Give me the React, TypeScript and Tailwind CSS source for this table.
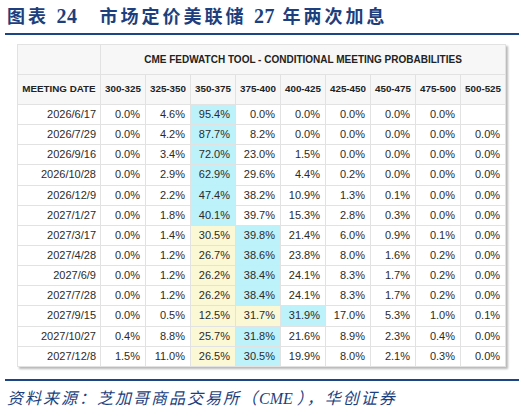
const columns = [
  "300-325",
  "325-350",
  "350-375",
  "375-400",
  "400-425",
  "425-450",
  "450-475",
  "475-500",
  "500-525",
];

type Tone = "blue" | "yellow" | undefined;

type Row = {
  date: string;
  values: string[];
  tones: Record<number, Tone>;
};

const rows: Row[] = [
  { date: "2026/6/17", values: ["0.0%", "4.6%", "95.4%", "0.0%", "0.0%", "0.0%", "0.0%", "0.0%", ""], tones: { 2: "blue" } },
  { date: "2026/7/29", values: ["0.0%", "4.2%", "87.7%", "8.2%", "0.0%", "0.0%", "0.0%", "0.0%", "0.0%"], tones: { 2: "blue" } },
  { date: "2026/9/16", values: ["0.0%", "3.4%", "72.0%", "23.0%", "1.5%", "0.0%", "0.0%", "0.0%", "0.0%"], tones: { 2: "blue" } },
  { date: "2026/10/28", values: ["0.0%", "2.9%", "62.9%", "29.6%", "4.4%", "0.2%", "0.0%", "0.0%", "0.0%"], tones: { 2: "blue" } },
  { date: "2026/12/9", values: ["0.0%", "2.2%", "47.4%", "38.2%", "10.9%", "1.3%", "0.1%", "0.0%", "0.0%"], tones: { 2: "blue" } },
  { date: "2027/1/27", values: ["0.0%", "1.8%", "40.1%", "39.7%", "15.3%", "2.8%", "0.3%", "0.0%", "0.0%"], tones: { 2: "blue" } },
  { date: "2027/3/17", values: ["0.0%", "1.4%", "30.5%", "39.8%", "21.4%", "6.0%", "0.9%", "0.1%", "0.0%"], tones: { 2: "yellow", 3: "blue" } },
  { date: "2027/4/28", values: ["0.0%", "1.2%", "26.7%", "38.6%", "23.8%", "8.0%", "1.6%", "0.2%", "0.0%"], tones: { 2: "yellow", 3: "blue" } },
  { date: "2027/6/9", values: ["0.0%", "1.2%", "26.2%", "38.4%", "24.1%", "8.3%", "1.7%", "0.2%", "0.0%"], tones: { 2: "yellow", 3: "blue" } },
  { date: "2027/7/28", values: ["0.0%", "1.2%", "26.2%", "38.4%", "24.1%", "8.3%", "1.7%", "0.2%", "0.0%"], tones: { 2: "yellow", 3: "blue" } },
  { date: "2027/9/15", values: ["0.0%", "0.5%", "12.5%", "31.7%", "31.9%", "17.0%", "5.3%", "1.0%", "0.1%"], tones: { 2: "yellow", 3: "yellow", 4: "blue" } },
  { date: "2027/10/27", values: ["0.4%", "8.8%", "25.7%", "31.8%", "21.6%", "8.9%", "2.3%", "0.4%", "0.0%"], tones: { 2: "yellow", 3: "blue" } },
  { date: "2027/12/8", values: ["1.5%", "11.0%", "26.5%", "30.5%", "19.9%", "8.0%", "2.1%", "0.3%", "0.0%"], tones: { 2: "yellow", 3: "blue" } },
];

const toneClass = (tone: Tone) =>
  tone === "blue" ? "bg-[#bdf2fb]" : tone === "yellow" ? "bg-[#fbf8d5]" : "bg-white";

export default function App() {
  return (
    <div className="flex h-[414px] w-[524px] flex-col bg-white">
      <h1 className="mt-[6px] flex pl-[7px] font-['Liberation_Serif','Noto_Sans_CJK_SC',serif] text-[18px] font-bold leading-[20px] tracking-[3px] text-[#1d3f7d] whitespace-pre">
        <span>
          图表 <span className="text-[20px] tracking-[0.5px]">24</span>
        </span>
        <span className="ml-[22px]">
          市场定价美联储 <span className="text-[20px] tracking-[0.5px]">27</span> 年两次加息
        </span>
      </h1>
      <div className="mx-[5px] mt-[6px] h-[2px] bg-[#1b4584]" />

      <div className="ml-[17px] mt-[9px] w-[489px] shadow-[2px_2px_2px_rgba(0,0,0,0.28)]">
        <table className="w-full table-fixed border-collapse font-['Liberation_Sans',Arial,sans-serif] text-[#2b2b2b]">
          <colgroup>
            <col className="w-[83px]" />
            {columns.map((c) => (
              <col key={c} className="w-[45px]" />
            ))}
          </colgroup>
          <thead>
            <tr className="h-[30px] bg-[#f7f7f7]">
              <th className="border border-[#e2e2e2]" />
              <th
                colSpan={9}
                className="border border-[#e2e2e2] text-center text-[10px] font-bold text-[#222]"
              >
                CME FEDWATCH TOOL - CONDITIONAL MEETING PROBABILITIES
              </th>
            </tr>
            <tr className="h-[30px] bg-[#f7f7f7]">
              <th className="border border-[#e2e2e2] text-center text-[9.8px] font-bold text-[#222]">
                MEETING DATE
              </th>
              {columns.map((c) => (
                <th
                  key={c}
                  className="border border-[#e2e2e2] text-center text-[9.8px] font-bold text-[#222]"
                >
                  {c}
                </th>
              ))}
            </tr>
          </thead>
          <tbody>
            {rows.map((row) => (
              <tr key={row.date} className="h-[20.15px]">
                <td className="border border-[#e2e2e2] bg-white pr-[4px] text-right text-[11px] leading-none">
                  {row.date}
                </td>
                {row.values.map((v, i) => (
                  <td
                    key={i}
                    className={`border border-[#e2e2e2] pr-[5px] text-right text-[11px] leading-none ${toneClass(row.tones[i])}`}
                  >
                    {v}
                  </td>
                ))}
              </tr>
            ))}
          </tbody>
        </table>
      </div>

      <div className="mx-[5px] mt-[12px] h-[2px] bg-[#1b4584]" />
      <p className="mt-[8px] pl-[7px] font-['Liberation_Serif','Noto_Sans_CJK_SC',serif] text-[16px] italic leading-[19px] tracking-[2px] text-[#1d3f7d]">
        资料来源：芝加哥商品交易所（<span className="tracking-normal">CME </span>），华创证券
      </p>
    </div>
  );
}
